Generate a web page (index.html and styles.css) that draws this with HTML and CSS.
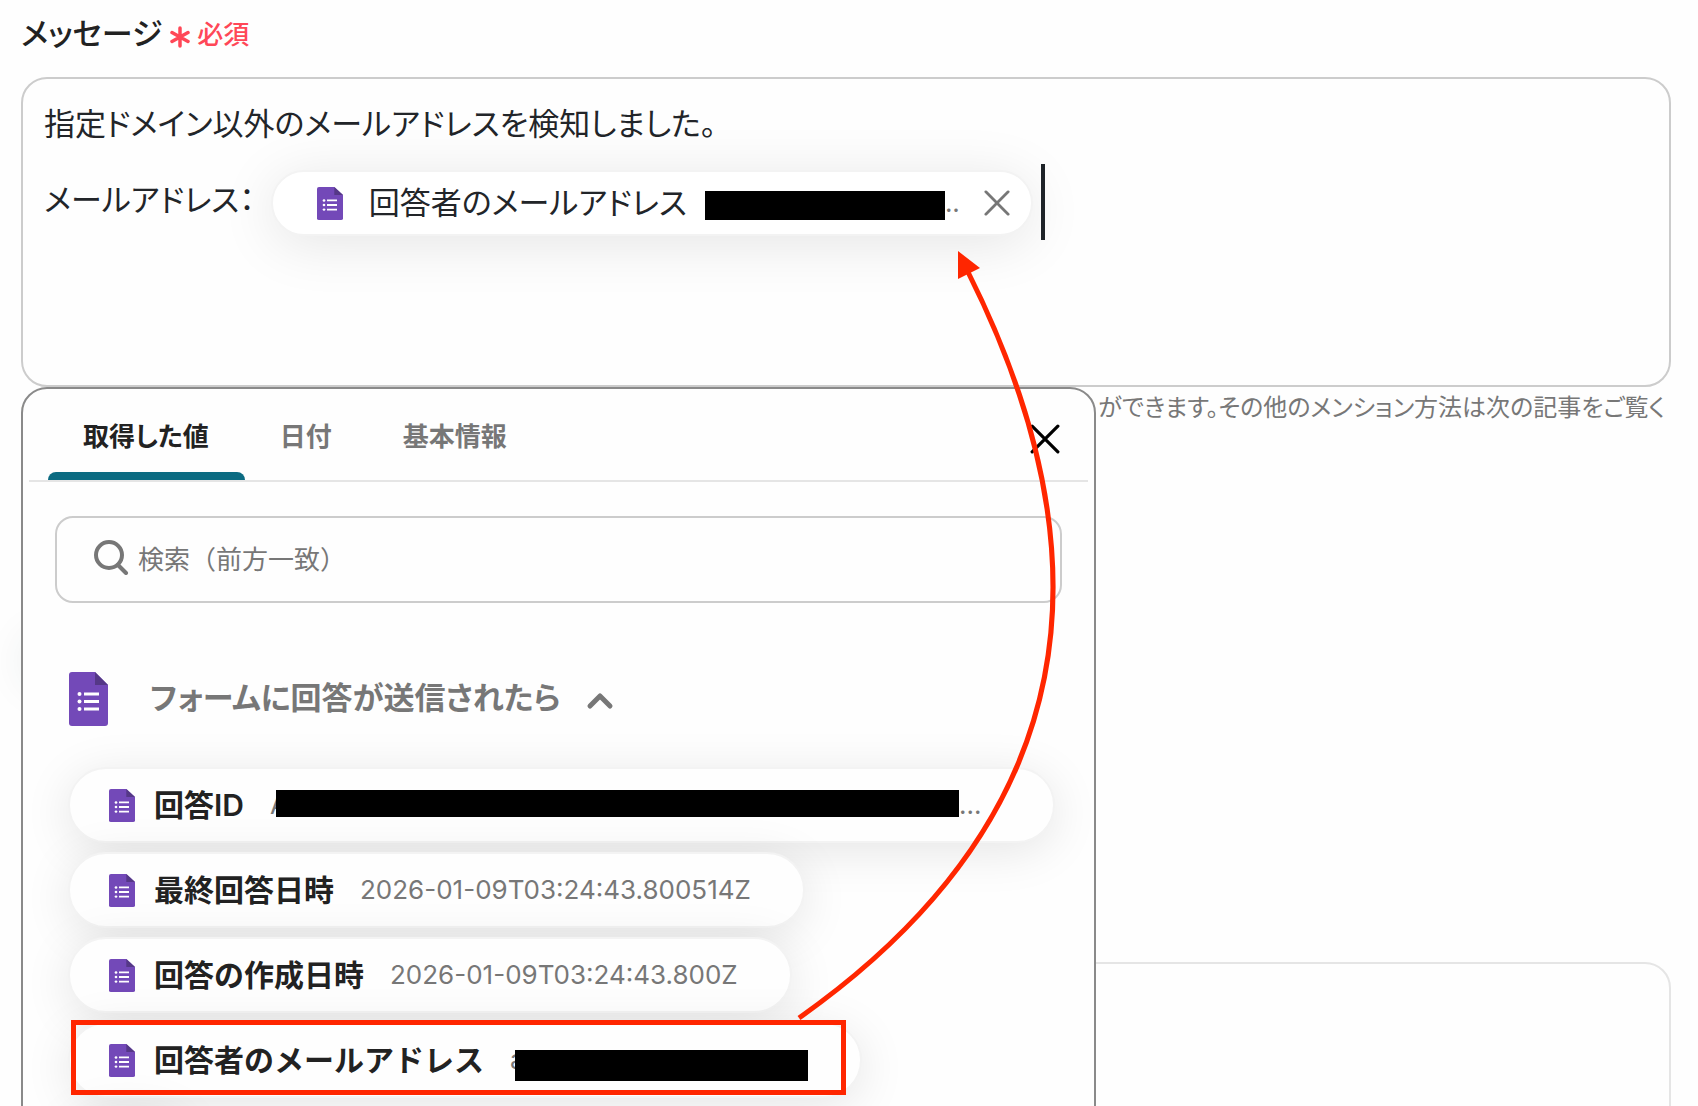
FILE: index.html
```html
<!DOCTYPE html>
<html lang="ja">
<head>
<meta charset="utf-8">
<meta name="viewport" content="width=device-width, initial-scale=1">
<title>メッセージ</title>
<link rel="stylesheet" href="styles.css">
</head>
<body>
<svg class="defs" aria-hidden="true">
  <symbol id="form-icon" viewBox="0 0 39 54" preserveAspectRatio="none">
    <path fill="#7349b8" d="M3 0h23l13 13v38a3 3 0 0 1-3 3H3a3 3 0 0 1-3-3V3a3 3 0 0 1 3-3z"/>
    <path fill="#553887" d="M26 0l13 13H26z"/>
    <g fill="#fff"><circle cx="10.500" cy="22" r="2"/><circle cx="10.500" cy="29.500" r="2"/><circle cx="10.500" cy="37" r="2"/><path d="M15 20.500h15v3H15zM15 28h15v3H15zM15 35.500h15v3H15z"/></g>
  </symbol>
  <symbol id="cross-icon" viewBox="0 0 28 28">
    <path d="M2 2l24 24M26 2L2 26" fill="none" stroke="currentColor" stroke-width="3" stroke-linecap="round"/>
  </symbol>
</svg>

<main class="page">
  <div class="field-label">
    <span id="message-label">メッセージ</span>
    <span class="required">
      <svg class="asterisk" width="20" height="22" viewBox="0 0 20 22" aria-hidden="true"><path d="M10 2v18M2 6.500l16 9M18 6.500l-16 9" fill="none" stroke="currentColor" stroke-width="3.500" stroke-linecap="round"/></svg>
      必須
    </span>
  </div>

  <div class="editor" role="textbox" aria-multiline="true" aria-labelledby="message-label">
    <p class="line">指定ドメイン以外のメールアドレスを検知しました。</p>
    <div class="line line-chip">
      <span class="line-text">メールアドレス：</span>
      <span class="token">
        <svg class="icon-small" aria-hidden="true"><use href="#form-icon"/></svg>
        <span class="token-name">回答者のメールアドレス</span>
        <span class="redacted redacted-token"></span><span class="value">..</span>
        <button class="token-remove" type="button" aria-label="削除"><svg width="26" height="26"><use href="#cross-icon"/></svg></button>
      </span>
      <span class="caret"></span>
    </div>
  </div>

  <div class="below">
    <div class="help"><span>※</span><span>ができます。その他のメンション方法は次の記事をご覧く</span></div>
    <div class="handle"></div>
    <div class="next-card"></div>

    <section class="picker">
      <div class="tabs" role="tablist">
        <button class="tab tab-active" role="tab" type="button" aria-selected="true">取得した値</button>
        <button class="tab" role="tab" type="button">日付</button>
        <button class="tab" role="tab" type="button">基本情報</button>
        <button class="picker-close" type="button" aria-label="閉じる"><svg width="30" height="30"><use href="#cross-icon"/></svg></button>
      </div>
      <label class="search">
        <svg class="search-icon" width="36" height="36" viewBox="0 0 36 36" aria-hidden="true"><circle cx="16" cy="16" r="13" fill="none" stroke="currentColor" stroke-width="4"/><path d="M25 26l8 8" stroke="currentColor" stroke-width="4" stroke-linecap="round"/></svg>
        <input class="search-input" type="text" placeholder="検索（前方一致）" aria-label="検索">
      </label>
      <button class="group" type="button" aria-expanded="true">
        <svg class="icon-large" aria-hidden="true"><use href="#form-icon"/></svg>
        <span class="group-name">フォームに回答が送信されたら</span>
        <svg class="chevron" width="28" height="18" viewBox="0 0 28 18" aria-hidden="true"><path d="M4 14L14 4l10 10" fill="none" stroke="currentColor" stroke-width="5" stroke-linecap="round" stroke-linejoin="round"/></svg>
      </button>
      <div class="chips">
        <button class="chip" type="button"><svg class="icon-small" aria-hidden="true"><use href="#form-icon"/></svg><span class="chip-name">回答ID</span><span class="value value-redacted value-truncated">A<span class="redacted redacted-id"></span>...</span></button>
        <button class="chip" type="button"><svg class="icon-small" aria-hidden="true"><use href="#form-icon"/></svg><span class="chip-name">最終回答日時</span><span class="value">2026-01-09T03:24:43.800514Z</span></button>
        <button class="chip" type="button"><svg class="icon-small" aria-hidden="true"><use href="#form-icon"/></svg><span class="chip-name">回答の作成日時</span><span class="value">2026-01-09T03:24:43.800Z</span></button>
        <button class="chip" type="button"><svg class="icon-small" aria-hidden="true"><use href="#form-icon"/></svg><span class="chip-name">回答者のメールアドレス</span><span class="value value-redacted">a<span class="redacted redacted-mail"></span></span></button>
        <button class="chip" type="button"><svg class="icon-small" aria-hidden="true"><use href="#form-icon"/></svg></button>
      </div>
    </section>
  </div>

  <svg class="annotation" width="1100" height="1106" aria-hidden="true">
    <rect x="73.500" y="1022.500" width="770" height="70" fill="none" stroke="#ff2600" stroke-width="5"/>
    <path d="M968 272Q1200 735 799 1018" fill="none" stroke="#ff2600" stroke-width="5"/>
    <path d="M958 251l22 17-22 11z" fill="#ff2600"/>
  </svg>
</main>
</body>
</html>
```
FILE: styles.css
```css
* { box-sizing: border-box; }

body {
  margin: 0;
  background: #fefefe;
  color: #222;
  font-family: Inter, "Noto Sans CJK JP", sans-serif;
  font-feature-settings: "palt";
  font-size: 31px;
  line-height: 40px;
}

button {
  margin: 0;
  padding: 0;
  border: 0;
  background: none;
  color: inherit;
  font: inherit;
  font-feature-settings: inherit;
  text-align: left;
  white-space: nowrap;
}

svg { display: block; flex: none; }

.defs { position: absolute; width: 0; height: 0; }

.page {
  position: relative;
  display: flex;
  flex-direction: column;
  height: 100vh;
  padding: 14px 27px 0 21px;
  overflow: hidden;
}

.field-label {
  display: flex;
  align-items: center;
  gap: 8px;
  height: 63px;
  padding-bottom: 24px;
  font-weight: 500;
}

.required {
  display: flex;
  align-items: center;
  gap: 7px;
  padding-top: 2px;
  color: #ff4757;
  font-size: 26px;
}

.asterisk { margin-top: 4px; }

.editor {
  flex: none;
  height: 310px;
  padding: 25px 21px;
  border: 2px solid #ccc;
  border-radius: 26px;
  color: #222529;
}

.line { margin: 0; }

.line-chip {
  display: flex;
  align-items: center;
  height: 76px;
  margin-top: 20px;
}

.line-text { padding-bottom: 4px; }

.token {
  display: flex;
  align-items: center;
  height: 66px;
  margin: 2px 0 0 16px;
  padding: 0 21px 0 44px;
  border: 2px solid #f3f3f3;
  border-radius: 33px;
  background: #fff;
  box-shadow: 0 8px 56px rgba(0, 0, 0, .1);
}

.token-name { margin: 0 18px 0 26px; }

.token-remove { margin-left: 24px; color: #777; }

.caret {
  width: 4px;
  height: 76px;
  margin-left: 8px;
  background: #1e2328;
}

.icon-small { width: 26px; height: 33px; }
.icon-large { width: 39px; height: 54px; }

.value { color: #777; font-size: 26px; }
.value-redacted { display: flex; align-items: center; }
.value-truncated { padding-right: 20px; }

.redacted { flex: none; background: #000; }
.redacted-token { width: 240px; height: 29px; margin-top: 4px; }
.redacted-id { width: 683px; height: 27px; margin: 0 0 4px -12px; }
.redacted-mail { width: 293px; height: 31px; margin: 10px 0 0 -10px; }

.below {
  position: relative;
  flex: 1;
  min-height: 0;
}

.help {
  display: flex;
  justify-content: space-between;
  padding: 1px 6px 0 0;
  color: #777;
  font-size: 24px;
  white-space: nowrap;
}

.handle {
  position: absolute;
  top: 240px;
  left: 0;
  width: 60px;
  height: 60px;
  border-radius: 30px;
  box-shadow: 0 4px 40px rgba(0, 60, 60, .08);
}

.next-card {
  height: 200px;
  margin-top: 534px;
  border: 2px solid #e5e5e5;
  border-radius: 26px;
}

.picker {
  position: absolute;
  top: 0;
  left: 0;
  width: 1075px;
  padding: 0 6px;
  border: 2px solid #8a8a8a;
  border-radius: 26px;
  background: #fefefe;
}

.tabs {
  display: flex;
  height: 93px;
  padding-left: 19px;
  border-bottom: 2px solid #e5e5e5;
  font-size: 26px;
  font-weight: 700;
}

.tab {
  padding: 4px 36px 0 35px;
  color: #777;
}

.tab-active {
  position: relative;
  color: #222;
}

.tab-active::after {
  content: "";
  position: absolute;
  right: 0;
  bottom: 0;
  left: 0;
  height: 8px;
  border-radius: 8px 8px 0 0;
  background: #0b6b82;
}

.picker-close {
  margin: 8px 28px 0 auto;
  color: #000;
}

.search {
  display: flex;
  align-items: center;
  gap: 9px;
  height: 87px;
  margin: 34px 26px 0;
  padding: 0 36px;
  border: 2px solid #ccc;
  border-radius: 18px;
  color: #777;
}

.search-icon { margin-bottom: 5px; }

.search-input {
  flex: 1;
  min-width: 0;
  padding: 0;
  border: 0;
  outline: 0;
  background: none;
  color: #222;
  font: inherit;
  font-feature-settings: normal;
  font-size: 26px;
}

.search-input::placeholder { color: #777; }

.group {
  display: flex;
  align-items: center;
  margin: 69px 0 0 40px;
  color: #777;
  font-weight: 700;
}

.group-name { margin: 0 25px 0 42px; padding-bottom: 2px; }

.chevron { margin-top: 4px; }

.chips {
  display: flex;
  flex-direction: column;
  align-items: flex-start;
  gap: 9px;
  padding: 41px 39px 20px;
}

.chip {
  display: flex;
  align-items: center;
  height: 76px;
  padding: 0 52px 0 39px;
  border: 2px solid #f3f3f3;
  border-radius: 38px;
  background: #fefefe;
  box-shadow: 0 8px 48px rgba(0, 0, 0, .1);
}

.chip-name {
  margin: 0 26px 0 19px;
  font-feature-settings: normal;
  font-size: 30px;
  font-weight: 600;
}

.annotation {
  position: absolute;
  top: 0;
  left: 0;
  pointer-events: none;
}
```
